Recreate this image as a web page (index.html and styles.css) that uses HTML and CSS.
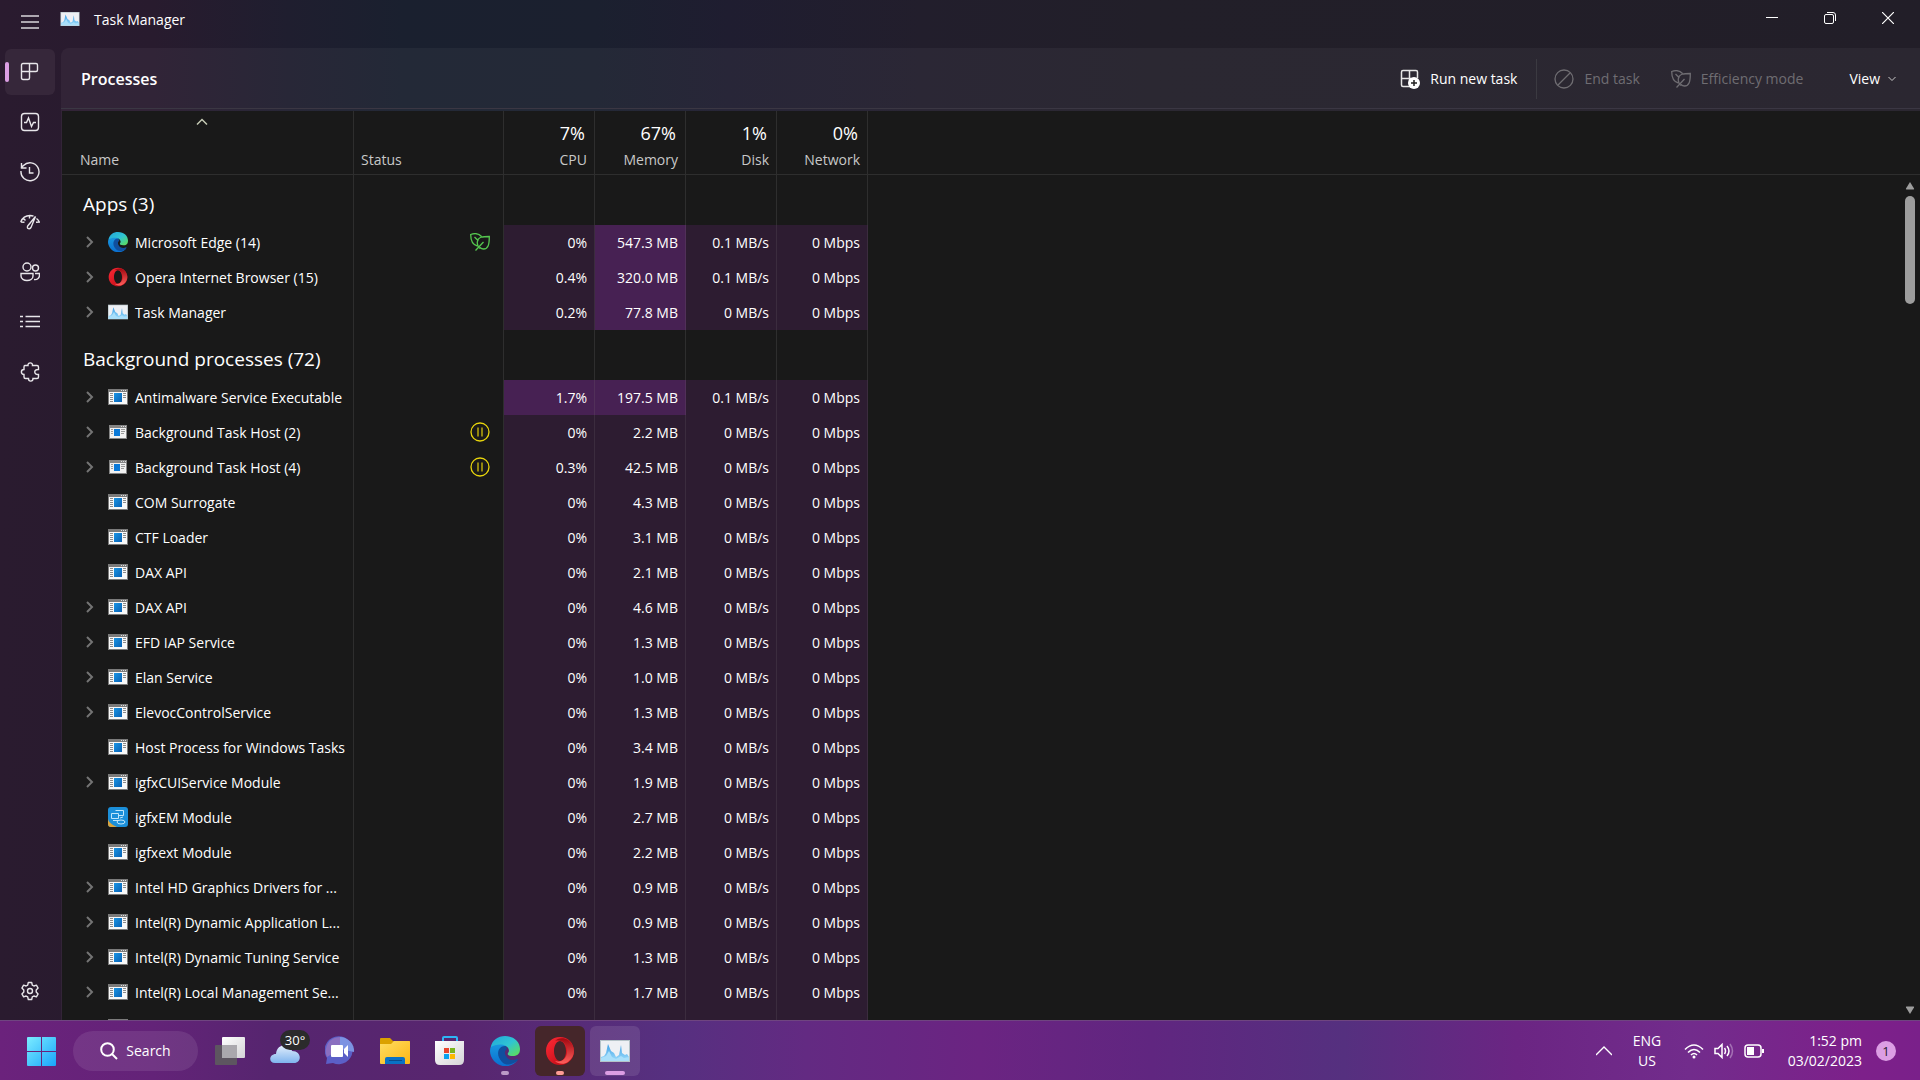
FILE: index.html
```html
<!DOCTYPE html>
<html lang="en">
<head>
<meta charset="utf-8">
<title>Task Manager</title>
<link rel="stylesheet" href="styles.css">
</head>
<body>
<svg class="defs" aria-hidden="true">
  <defs>
    <linearGradient id="gBlue" x1="0" y1="0" x2="1" y2="1"><stop offset="0" stop-color="#1a94e4"/><stop offset="1" stop-color="#0a62b4"/></linearGradient>
    <linearGradient id="gStart" x1="0" y1="0" x2="1" y2="1"><stop offset="0" stop-color="#7cecff"/><stop offset="1" stop-color="#18a4fb"/></linearGradient>
    <linearGradient id="gEdgeTop" x1="0" y1="0" x2="1" y2="1"><stop offset="0" stop-color="#22a5d8"/><stop offset=".5" stop-color="#2fc4d4"/><stop offset="1" stop-color="#63e04c"/></linearGradient>
    <linearGradient id="gEdgeLeft" x1="0" y1="0" x2="0" y2="1"><stop offset="0" stop-color="#1a9be0"/><stop offset="1" stop-color="#0a6fd0"/></linearGradient>
    <linearGradient id="gOpera" x1="0" y1="0" x2="1" y2="1"><stop offset="0" stop-color="#ff2a36"/><stop offset="1" stop-color="#b3060f"/></linearGradient>
    <linearGradient id="gOperaR" x1="0" y1="0" x2="0" y2="1"><stop offset="0" stop-color="#a00810"/><stop offset="1" stop-color="#ff5f5c"/></linearGradient>
    <linearGradient id="gFolder" x1="0" y1="0" x2="1" y2="1"><stop offset="0" stop-color="#ffdd62"/><stop offset="1" stop-color="#fcb714"/></linearGradient>
    <linearGradient id="gCloud" x1="0" y1="0" x2="0" y2="1"><stop offset="0" stop-color="#e2eefc"/><stop offset="1" stop-color="#7fb4ee"/></linearGradient>
    <linearGradient id="gWhite" x1="0" y1="0" x2="1" y2="1"><stop offset="0" stop-color="#ffffff"/><stop offset="1" stop-color="#d4d4d6"/></linearGradient>
    <linearGradient id="gWave" x1="0" y1="0" x2="0" y2="1"><stop offset="0" stop-color="#3f9fe6"/><stop offset="1" stop-color="#9bdcfb"/></linearGradient>
  </defs>
  <symbol id="proc" viewBox="0 0 20 16">
    <path fill="#7b7b7b" d="M0 0h20v16H0z"/><path fill="#f8f8f8" d="M1 3h18v12H1z"/>
    <path fill="#ddd" d="M13 1h1v1h-1zM15 1h1v1h-1zM17 1h1v1h-1z"/>
    <path fill="url(#gBlue)" d="M6 4h8v9H6z"/>
    <path stroke="#8a8a8a" d="M2 4.500h3M2 6.500h3M2 8.500h3M2 10.500h3M2 12.500h3M15 4.500h3M15 6.500h3M15 8.500h3"/>
  </symbol>
  <symbol id="host" viewBox="0 0 20 16">
    <path fill="#858585" d="M1 1h18v14H1z"/><path fill="#f1f1f1" d="M2 4h16v10H2z"/>
    <path fill="#ddd" d="M13 2h1v1h-1zM15 2h1v1h-1zM17 2h1v1h-1z"/>
    <path fill="#0a79d8" d="M6 5h6v7H6z"/>
    <path stroke="#9a9a9a" d="M3 5.500h2M3 7.500h2M3 9.500h2M13 5.500h4M13 7.500h4M13 9.500h3"/>
  </symbol>
  <symbol id="taskmgr" viewBox="0 0 30 22">
    <path fill="#b5c3c8" d="M0 0h30v22H0z"/><path fill="#eef0f4" d="M1 1h28v20H1z"/>
    <path fill="url(#gWave)" d="M1 17l3-1 2-3 2-9 3 7 3 2 2 4 3-2 2-10 1 8 3 2 2-1 2 3v4H1z"/>
    <path fill="#a9dffa" d="M1 18l5-2 3-5 3 6 4 2 5-3 3 2 5-1v4H1z"/>
  </symbol>
  <symbol id="edge" viewBox="0 0 30 30">
    <path fill="url(#gEdgeLeft)" d="M1 10C4 4 11 5 16 10c-6 1-7 8-2 13 4 4 9 4 13 2C21 32 10 32 4 25 0 20-1 15 1 10z"/>
    <path fill="#104f9e" d="M16 10c-8-1-11 9-4 16 4 4 10 3 15-1 1-1 1-2 0-2-4 2-9 1-11-3-2-3-1-6 1-7z"/>
    <path fill="url(#gEdgeTop)" d="M1 11C2 4 8 0 15 0c9 0 15 6 15 13 0 6-4 7-7 7-4 0-6-1-5-3 2-2 1-6-4-8-5-1-10 0-13 2z"/>
  </symbol>
  <symbol id="opera" viewBox="0 0 30 30">
    <path fill="url(#gOpera)" fill-rule="evenodd" d="M15 1C7 1 1 7 1 15s6 14 14 14 14-6 14-14S23 1 15 1zm0 4c3 0 6 4 6 10s-3 10-6 10-6-4-6-10 3-10 6-10z"/>
    <path fill="url(#gOperaR)" d="M10 5c2-3 9-4 13-1 4 3 6 7 6 11s-2 8-6 11c-4 3-10 2-13-1 7 2 12-3 12-10S17 3 10 5z"/>
  </symbol>
  <symbol id="igfx" viewBox="0 0 20 20">
    <rect width="20" height="20" rx="3" fill="#1b8fd9"/><path fill="#dca43c" d="M0 12c1 4 5 6 9 8H3c-2 0-3-1-3-3z"/>
    <path fill="none" stroke="#bfe6fb" d="M3.500 6.500h7v5h-7zM7.500 3.500h8v5h-5M5 13.500h5M12 11l3-1"/><ellipse cx="13" cy="15" rx="4" ry="2" fill="none" stroke="#c8eafc"/>
  </symbol>
  <symbol id="chev" viewBox="0 0 8 12"><path d="M1 1l5 5-5 5" fill="none" stroke="currentColor" stroke-width="2"/></symbol>
  <symbol id="leaf" viewBox="0 0 20 18">
    <path fill="none" stroke="currentColor" stroke-width="1.300" d="M7.500 13C3 12 .7 8 .7 1.500 5 0 9 .5 11.500 3.500M10 15.500C7 13 7 9 8 6.500c1.500-2 3-3 11.300-3 0 8-1 12.500-5.800 12.500-1.500 0-2.500-.5-3.500-1.500M4.500 4l4 4M5.500 17.500L13.500 9"/>
  </symbol>
  <symbol id="pause" viewBox="0 0 20 20"><circle cx="10" cy="10" r="9" fill="none" stroke="#e8d50c" stroke-width="1.300"/><path d="M8 5.500v9M12 5.500v9" stroke="#b9a90c" stroke-width="1.500"/></symbol>
</svg>

<div class="window">
  <header class="titlebar">
    <button class="menu" aria-label="Open navigation"><svg width="20" height="14" viewBox="0 0 20 14"><path d="M1 1h18M1 7h18M1 13h18" stroke="#d9d6db" stroke-width="1.300"/></svg></button>
    <svg class="app-icon" width="20" height="14"><use href="#taskmgr"/></svg>
    <h1>Task Manager</h1>
    <div class="caption">
      <button aria-label="Minimise"><svg width="12" height="12"><path d="M0 5.500h12" stroke="#fff"/></svg></button>
      <button aria-label="Restore"><svg width="12" height="12" fill="none" stroke="#fff"><rect x=".5" y="2.500" width="9" height="9" rx="1.500"/><path d="M3 .5h6q2.500 0 2.500 2.500v6"/></svg></button>
      <button aria-label="Close"><svg width="12" height="12"><path d="M0 0l12 12M12 0L0 12" stroke="#fff" stroke-width="1.200"/></svg></button>
    </div>
  </header>

  <div class="body">
    <nav class="sidebar">
      <button class="active" aria-label="Processes"><svg width="20" height="20" viewBox="0 0 20 20"><path d="M3 1.500h13q1.500 0 1.500 1.500v5q0 1.500-1.500 1.500h-6.500V16q0 1.500-1.500 1.500H3Q1.500 17.500 1.500 16V3q0-1.500 1.500-1.500zM9.500 1.500v8M1.500 9.500h8"/></svg></button>
      <button aria-label="Performance"><svg width="20" height="20" viewBox="0 0 20 20"><rect x="1.500" y="1.500" width="17" height="17" rx="3"/><path d="M4 10.500h2.500L8.500 6l3 8.500 2-4H16"/></svg></button>
      <button aria-label="App history"><svg width="20" height="20" viewBox="0 0 20 20"><path d="M1 9a9 9 0 1 0 2.500-5.500L1 6M1.500 1v5h5M9.500 5v6h4"/></svg></button>
      <button aria-label="Startup apps"><svg width="20" height="20" viewBox="0 0 20 20"><path d="M.7 10C2.500 5.500 6 3.500 10 3.500c1.500 0 2.500.2 3.500.7M.7 10l3.800.3M3.500 6.500l2 2M9.500 3.500v3M15.500 4.500L11 15.500q-1.500 2-3 1-1-1-.3-2.500zM16.500 6.500q2 1.500 2.800 3.500l-3.300.3"/></svg></button>
      <button aria-label="Users"><svg width="20" height="20" viewBox="0 0 20 20"><circle cx="7" cy="5" r="4"/><circle cx="15.500" cy="6" r="3"/><path d="M1 11.500h12V14c0 6-12 6-12 0zM15 11.500h4.500V13c0 3-2 5-5.500 4.500"/></svg></button>
      <button aria-label="Details"><svg width="20" height="20" viewBox="0 0 20 20"><path d="M5.500 4.500H20M5.500 9.500H20M5.500 14.500H20M0 4.500h3M0 9.500h3M0 14.500h3"/></svg></button>
      <button aria-label="Services"><svg width="20" height="20" viewBox="0 0 20 20"><path d="M4.500 3.500H8c-.5-3.500 5-3.500 4.500 0H17q1.500 0 1.500 1.500v2.500c-5-.5-5 5.500 0 5V15q0 1.500-1.500 1.500h-4c0 3.500-4.500 3.500-4.500 0H5.500q-1.500 0-1.500-1.500v-2.500c-3.500 0-3.500-5 0-5V5q0-1.500 1-1.500z"/></svg></button>
      <button class="settings" aria-label="Settings"><svg width="20" height="20" viewBox="0 0 20 20"><circle cx="10" cy="10" r="2.500"/><path d="M8.300 1.500h3.400l.6 2.600 1.600.9 2.500-.8 1.700 2.900-1.900 1.900v2l1.900 1.900-1.700 2.900-2.500-.8-1.600.9-.6 2.600H8.300l-.6-2.600-1.600-.9-2.500.8-1.700-2.900L3.800 11V9L1.900 7.100l1.700-2.900 2.500.8 1.600-.9z" stroke-linejoin="round"/></svg></button>
    </nav>

    <main>
      <div class="toolbar">
        <h2>Processes</h2>
        <button class="tool"><svg width="20" height="20" viewBox="0 0 20 20" fill="none" stroke="#e6e6e6" stroke-width="1.500"><path d="M10 17.500H3Q1.500 17.500 1.500 16V3Q1.500 1.500 3 1.500h13q1.500 0 1.500 1.500v6M9.500 1.500v10M1.500 9.500H11"/><circle cx="14" cy="14" r="6" fill="#fff" stroke="none"/><path d="M14 11v6M11 14h6" stroke="#222"/></svg>Run new task</button>
        <span class="divider"></span>
        <button class="tool end" disabled><svg width="20" height="20" viewBox="0 0 20 20" fill="none" stroke="currentColor" stroke-width="1.300"><circle cx="10" cy="10" r="9"/><path d="M4 16L16 4"/></svg>End task</button>
        <button class="tool eff" disabled><svg width="20" height="18"><use href="#leaf"/></svg>Efficiency mode</button>
        <button class="tool view">View<svg width="8" height="6" fill="none" stroke="#ccc"><path d="M.5 1L4 4.500 7.500 1"/></svg></button>
      </div>

      <div class="sheet">
        <div class="list">
          <table>
            <colgroup><col class="c-name"><col class="c-status"><col class="c-num"><col class="c-num"><col class="c-num"><col class="c-num"><col></colgroup>
            <thead>
              <tr>
                <th class="name"><svg class="sort" width="12" height="8" fill="none" stroke="#c5cbb5" stroke-width="1.500"><path d="M1 6.500l5-5 5 5"/></svg>Name</th>
                <th class="status">Status</th>
                <th><b>7%</b>CPU</th><th><b>67%</b>Memory</th><th><b>1%</b>Disk</th><th><b>0%</b>Network</th><th class="rest"></th>
              </tr>
            </thead>
            <tbody>
              <tr class="group"><th scope="rowgroup">Apps (3)</th><td></td><td></td><td></td><td></td><td></td><td></td></tr>
              <tr><td><div class="proc"><button aria-label="Expand"><svg><use href="#chev"/></svg></button><svg class="sq"><use href="#edge"/></svg><span>Microsoft Edge (14)</span></div></td><td class="flag"><svg class="leaf" width="20" height="18"><use href="#leaf"/></svg></td><td>0%</td><td class="hot">547.3 MB</td><td>0.1 MB/s</td><td>0 Mbps</td><td></td></tr>
              <tr><td><div class="proc"><button aria-label="Expand"><svg><use href="#chev"/></svg></button><svg class="sq"><use href="#opera"/></svg><span>Opera Internet Browser (15)</span></div></td><td></td><td>0.4%</td><td class="hot">320.0 MB</td><td>0.1 MB/s</td><td>0 Mbps</td><td></td></tr>
              <tr><td><div class="proc"><button aria-label="Expand"><svg><use href="#chev"/></svg></button><svg><use href="#taskmgr"/></svg><span>Task Manager</span></div></td><td></td><td>0.2%</td><td class="hot">77.8 MB</td><td>0 MB/s</td><td>0 Mbps</td><td></td></tr>
              <tr class="group"><th scope="rowgroup">Background processes (72)</th><td></td><td></td><td></td><td></td><td></td><td></td></tr>
              <tr><td><div class="proc"><button aria-label="Expand"><svg><use href="#chev"/></svg></button><svg><use href="#proc"/></svg><span>Antimalware Service Executable</span></div></td><td></td><td class="hot">1.7%</td><td class="hot">197.5 MB</td><td>0.1 MB/s</td><td>0 Mbps</td><td></td></tr>
              <tr><td><div class="proc"><button aria-label="Expand"><svg><use href="#chev"/></svg></button><svg><use href="#host"/></svg><span>Background Task Host (2)</span></div></td><td class="flag"><svg width="20" height="20"><use href="#pause"/></svg></td><td>0%</td><td>2.2 MB</td><td>0 MB/s</td><td>0 Mbps</td><td></td></tr>
              <tr><td><div class="proc"><button aria-label="Expand"><svg><use href="#chev"/></svg></button><svg><use href="#host"/></svg><span>Background Task Host (4)</span></div></td><td class="flag"><svg width="20" height="20"><use href="#pause"/></svg></td><td>0.3%</td><td>42.5 MB</td><td>0 MB/s</td><td>0 Mbps</td><td></td></tr>
              <tr><td><div class="proc leafless"><svg><use href="#proc"/></svg><span>COM Surrogate</span></div></td><td></td><td>0%</td><td>4.3 MB</td><td>0 MB/s</td><td>0 Mbps</td><td></td></tr>
              <tr><td><div class="proc leafless"><svg><use href="#proc"/></svg><span>CTF Loader</span></div></td><td></td><td>0%</td><td>3.1 MB</td><td>0 MB/s</td><td>0 Mbps</td><td></td></tr>
              <tr><td><div class="proc leafless"><svg><use href="#proc"/></svg><span>DAX API</span></div></td><td></td><td>0%</td><td>2.1 MB</td><td>0 MB/s</td><td>0 Mbps</td><td></td></tr>
              <tr><td><div class="proc"><button aria-label="Expand"><svg><use href="#chev"/></svg></button><svg><use href="#proc"/></svg><span>DAX API</span></div></td><td></td><td>0%</td><td>4.6 MB</td><td>0 MB/s</td><td>0 Mbps</td><td></td></tr>
              <tr><td><div class="proc"><button aria-label="Expand"><svg><use href="#chev"/></svg></button><svg><use href="#proc"/></svg><span>EFD IAP Service</span></div></td><td></td><td>0%</td><td>1.3 MB</td><td>0 MB/s</td><td>0 Mbps</td><td></td></tr>
              <tr><td><div class="proc"><button aria-label="Expand"><svg><use href="#chev"/></svg></button><svg><use href="#proc"/></svg><span>Elan Service</span></div></td><td></td><td>0%</td><td>1.0 MB</td><td>0 MB/s</td><td>0 Mbps</td><td></td></tr>
              <tr><td><div class="proc"><button aria-label="Expand"><svg><use href="#chev"/></svg></button><svg><use href="#proc"/></svg><span>ElevocControlService</span></div></td><td></td><td>0%</td><td>1.3 MB</td><td>0 MB/s</td><td>0 Mbps</td><td></td></tr>
              <tr><td><div class="proc leafless"><svg><use href="#proc"/></svg><span>Host Process for Windows Tasks</span></div></td><td></td><td>0%</td><td>3.4 MB</td><td>0 MB/s</td><td>0 Mbps</td><td></td></tr>
              <tr><td><div class="proc"><button aria-label="Expand"><svg><use href="#chev"/></svg></button><svg><use href="#proc"/></svg><span>igfxCUIService Module</span></div></td><td></td><td>0%</td><td>1.9 MB</td><td>0 MB/s</td><td>0 Mbps</td><td></td></tr>
              <tr><td><div class="proc leafless"><svg class="sq"><use href="#igfx"/></svg><span>igfxEM Module</span></div></td><td></td><td>0%</td><td>2.7 MB</td><td>0 MB/s</td><td>0 Mbps</td><td></td></tr>
              <tr><td><div class="proc leafless"><svg><use href="#proc"/></svg><span>igfxext Module</span></div></td><td></td><td>0%</td><td>2.2 MB</td><td>0 MB/s</td><td>0 Mbps</td><td></td></tr>
              <tr><td><div class="proc"><button aria-label="Expand"><svg><use href="#chev"/></svg></button><svg><use href="#proc"/></svg><span>Intel HD Graphics Drivers for ...</span></div></td><td></td><td>0%</td><td>0.9 MB</td><td>0 MB/s</td><td>0 Mbps</td><td></td></tr>
              <tr><td><div class="proc"><button aria-label="Expand"><svg><use href="#chev"/></svg></button><svg><use href="#proc"/></svg><span>Intel(R) Dynamic Application L...</span></div></td><td></td><td>0%</td><td>0.9 MB</td><td>0 MB/s</td><td>0 Mbps</td><td></td></tr>
              <tr><td><div class="proc"><button aria-label="Expand"><svg><use href="#chev"/></svg></button><svg><use href="#proc"/></svg><span>Intel(R) Dynamic Tuning Service</span></div></td><td></td><td>0%</td><td>1.3 MB</td><td>0 MB/s</td><td>0 Mbps</td><td></td></tr>
              <tr><td><div class="proc"><button aria-label="Expand"><svg><use href="#chev"/></svg></button><svg><use href="#proc"/></svg><span>Intel(R) Local Management Se...</span></div></td><td></td><td>0%</td><td>1.7 MB</td><td>0 MB/s</td><td>0 Mbps</td><td></td></tr>
              <tr><td><div class="proc leafless"><svg><use href="#proc"/></svg></div></td><td></td><td></td><td></td><td></td><td></td><td></td></tr>
            </tbody>
          </table>
        </div>
        <div class="scroll">
          <svg width="10" height="8"><path d="M5 0l4 6.500q.5 1-.5 1h-7q-1 0-.5-1z" fill="#9d9d9d"/></svg>
          <span class="thumb"></span>
          <svg class="down" width="10" height="8"><path d="M5 8L1 1.500Q.5.500 1.500.500h7q1 0 .5 1z" fill="#9d9d9d"/></svg>
        </div>
      </div>
    </main>
  </div>
</div>

<footer class="taskbar">
  <button class="item" aria-label="Start"><svg width="30" height="30" viewBox="0 0 30 30"><path fill="url(#gStart)" d="M2 1h13v14H1V2q0-1 1-1zM16 1h13q1 0 1 1v13H16zM1 16h14v14H2q-1 0-1-1zM16 16h14v13q0 1-1 1H16z"/></svg></button>
  <button class="search"><svg width="18" height="18" fill="none" stroke="#fff" stroke-width="2"><circle cx="7.500" cy="7.500" r="6.300"/><path d="M12 12l5 5"/></svg>Search</button>
  <button class="item" aria-label="Task view"><svg width="30" height="28"><rect y="8" width="22" height="20" rx="1" fill="#5d5560"/><rect x="7" width="23" height="21" rx="1" fill="url(#gWhite)"/><path d="M7 8h15v13H7z" fill="#aaa8ad"/></svg></button>
  <button class="item" aria-label="Weather"><svg width="30" height="30"><path d="M5 27c-7 0-6-9 1-9C7 7 20 7 22 15c10 0 10 12 2 12z" fill="url(#gCloud)"/></svg><span class="temp">30°</span></button>
  <button class="item" aria-label="Chat"><svg width="30" height="30"><path d="M1 28l1-6A14 14 0 1 1 8 27z" fill="#5b5fc7"/><path d="M15 1a14 14 0 0 0-13 20l13-8z" fill="#8b6fc0"/><path d="M15 1a14 14 0 0 1 14 15l-14-3z" fill="#7c93e2"/><rect x="6" y="9" width="12" height="12" rx="1" fill="#fff"/><path d="M19 13l4-4v12l-4-4z" fill="#fff"/></svg></button>
  <button class="item" aria-label="File Explorer"><svg width="30" height="28"><path d="M0 10V2q0-1 1-1h9l3 3h16q1 0 1 1v5z" fill="#dba100"/><path d="M0 7h11l3-3h15q1 0 1 1v21q0 1-1 1H1q-1 0-1-1z" fill="url(#gFolder)"/><path d="M5 27v-5q0-2 2-2h16q2 0 2 2v5z" fill="#0a72c4"/><path d="M9 23.500h13" stroke="#0a4c8c"/></svg></button>
  <button class="item" aria-label="Microsoft Store"><svg width="30" height="30"><path d="M8 5V2q0-1 1-1h12q1 0 1 1v3" fill="none" stroke="#2eb4f5" stroke-width="2"/><path d="M0 5h29v19q0 5-5 5H5q-5 0-5-5z" fill="url(#gWhite)"/><path d="M9 12h5v5H9z" fill="#e8452c"/><path d="M15 12h5v5h-5z" fill="#7ab51d"/><path d="M9 18h5v5H9z" fill="#0aa2ee"/><path d="M15 18h5v5h-5z" fill="#fbb900"/></svg></button>
  <button class="item run" aria-label="Microsoft Edge"><svg width="30" height="30"><use href="#edge"/></svg></button>
  <button class="item run opera" aria-label="Opera"><svg width="30" height="30"><use href="#opera"/></svg></button>
  <button class="item run current" aria-label="Task Manager"><svg width="30" height="22"><use href="#taskmgr"/></svg></button>

  <div class="tray">
    <button aria-label="Show hidden icons"><svg width="16" height="10"><path d="M0 9l8-8 8 8" fill="none" stroke="#fff" stroke-width="1.300"/></svg></button>
    <button class="lang">ENG<br>US</button>
    <button class="quick" aria-label="Network, sound, battery">
      <svg width="20" height="16" fill="none" stroke="#fff" stroke-width="1.600"><path d="M1 6.500q9-9 18 0M4 9.500q6-6 12 0M7 12q3-3 6 0"/><circle cx="10" cy="14" r="1.500" fill="#fff" stroke="none"/></svg>
      <svg width="20" height="16" fill="none" stroke="#fff" stroke-width="1.500"><path d="M1 5.500h3l4-4v13l-4-4H1zM10.500 5q2 3 0 6M13 3q4 5 0 10"/><path d="M16 1q5 7 0 14" stroke="#a470b4"/></svg>
      <svg width="20" height="14" fill="none" stroke="#fff" stroke-width="1.500"><rect x="1" y="1" width="16" height="12" rx="3"/><path d="M19 5v4" stroke-width="2"/><path d="M3 3h7v8H3z" fill="#fff" stroke="none"/></svg>
    </button>
    <button class="clock">1:52 pm<br>03/02/2023</button>
    <button class="badge" aria-label="1 notification">1</button>
  </div>
</footer>
</body>
</html>
```
FILE: styles.css
```css
* { box-sizing: border-box; }

body {
  margin: 0;
  height: 100vh;
  display: flex;
  flex-direction: column;
  overflow: hidden;
  color: #fff;
  font: 14px/20px "Open Sans", "Noto Sans", sans-serif;
}

svg { display: block; flex: none; }
.defs { position: absolute; width: 0; height: 0; }
button { margin: 0; padding: 0; border: 0; background: none; color: inherit; font: inherit; }
h1, h2 { margin: 0; font-size: 14px; font-weight: 400; }

.window {
  flex: 1;
  min-height: 0;
  display: flex;
  flex-direction: column;
  background: linear-gradient(90deg, #2a1b2f 0, #281b2e 8%, #1f1e2f 15%, #1a202f 21%, #1b202f 31%, #1f1d30 38%, #221e2c 48%, #221f29 60%, #221e28 100%);
}

.titlebar { display: flex; align-items: flex-start; height: 48px; padding-left: 20px; }
.menu { margin: 15px 20px 0 0; }
.app-icon { margin-top: 12px; }
.titlebar h1 { margin: 10px 0 0 14px; }
.caption { display: flex; margin-left: auto; padding-right: 3px; }
.caption button { display: grid; place-items: center; width: 58px; height: 36px; }

.body { flex: 1; min-height: 0; display: flex; }

.sidebar { display: flex; flex-direction: column; gap: 4px; width: 61px; padding: 1px 6px 6px 5px; }
.sidebar button { position: relative; display: flex; align-items: center; height: 46px; padding-left: 15px; border-radius: 6px; }
.sidebar svg { fill: none; stroke: #e8e6ea; stroke-width: 1.4px; }
.sidebar .active { background: #36273a; }
.sidebar .active::before { content: ""; position: absolute; left: 0; top: 13px; width: 4px; height: 20px; border-radius: 2px; background: #dc9ee4; }
.sidebar .settings { margin-top: auto; }

main { flex: 1; min-width: 0; display: flex; flex-direction: column; background: rgba(255, 255, 255, 0.045); border-top-left-radius: 8px; }

.toolbar { display: flex; align-items: center; height: 61px; padding: 2px 24px 0 20px; border-bottom: 1px solid #3b3743; }
.toolbar h2 { margin-right: auto; font-size: 16px; font-weight: 600; }
.tool { display: flex; align-items: center; gap: 10px; }
.tool:disabled { color: #6f6d72; }
.divider { width: 1px; height: 40px; margin: 0 17px 0 19px; background: #3b3a41; }
.end { margin-right: 31px; }
.view { margin-left: 46px; gap: 8px; }

.sheet { flex: 1; min-height: 0; display: flex; margin: 2px 0 0 1px; background: #191919; }
.list { flex: 1; overflow: hidden; }

table { width: 100%; table-layout: fixed; border-spacing: 0; }
.c-name { width: 292px; }
.c-status { width: 150px; }
.c-num { width: 91px; }
th, td { padding: 0; font-weight: 400; text-align: right; border-right: 1px solid #2e2e2e; white-space: nowrap; }
th:last-child, td:last-child { border-right: 0; }

thead th { height: 64px; padding: 0 7px 4px; vertical-align: bottom; color: #c8c8c8; border-bottom: 1px solid #2e2e2e; }
thead b { display: block; padding: 0 2px 5px 0; color: #fff; font-size: 18px; line-height: 24px; font-weight: 400; }
thead .name { position: relative; padding-left: 18px; text-align: left; }
thead .status { text-align: left; }
.sort { position: absolute; left: 134px; top: 7px; }

tbody tr { height: 35px; }
tbody td { padding-right: 7px; }
tbody td:nth-child(n+3):nth-child(-n+6) { background: #2d1c31; border-color: #3b2c3e; }
tbody td.hot:nth-child(n+3) { background: #472153; border-color: #513059; }
tbody .group { height: 50px; }
.group th { padding: 8px 0 0 21px; font-size: 19px; text-align: left; }
tbody .group td:nth-child(n+2):nth-child(-n+6) { background: none; border-color: #2e2e2e; }

.proc { display: flex; align-items: center; padding-left: 24px; }
.proc button { margin: 0 14px 2px 0; color: #747474; }
.proc button svg { width: 8px; height: 12px; }
.proc > svg { width: 20px; height: 16px; margin: 0 7px 2px 0; }
.proc > .sq { height: 20px; }
.leafless { padding-left: 46px; }
.flag svg { margin: 0 6px 2px auto; }
.leaf { color: #55c74f; }

.scroll { display: flex; flex-direction: column; align-items: center; width: 18px; margin-top: 63px; padding: 7px 3px 6px 0; border-top: 1px solid #2e2e2e; }
.thumb { width: 10px; height: 108px; margin-top: 6px; border-radius: 5px; background: #9d9d9d; }
.down { margin-top: auto; }

.taskbar {
  display: flex;
  align-items: center;
  gap: 5px;
  height: 60px;
  padding-left: 16px;
  border-top: 1px solid #6f4580;
  background: linear-gradient(90deg, #6b227c 0, #632378 8%, #56256f 14%, #58266f 24%, #563080 35%, #632a82 42%, #6b2482 51%, #602680 60%, #55307f 70%, #6b2583 79%, #722c8c 88%, #7d208a 97%, #7a208a 100%);
}
.item { position: relative; display: grid; place-items: center; width: 50px; height: 50px; border-radius: 6px; }
.search { display: flex; align-items: center; justify-content: center; gap: 8px; width: 125px; height: 40px; margin: 0 2px; border-radius: 20px; background: rgba(255, 255, 255, 0.09); }
.temp { position: absolute; left: 20px; top: 4px; width: 30px; height: 20px; border-radius: 10px; background: #2b2b2b; font-size: 13px; text-align: center; }
.run::after { content: ""; position: absolute; left: 21px; bottom: 1px; width: 8px; height: 4px; border-radius: 2px; background: #bb9ac7; }
.opera { background: #45262a; }
.opera::after { background: #ff9c94; }
.current { background: rgba(255, 255, 255, 0.1); }
.current::after { left: 15px; width: 20px; background: #dc9ee4; }

.tray { display: flex; align-items: center; margin-left: auto; padding-right: 24px; }
.lang { width: 30px; margin: 0 22px 0 20px; }
.quick { display: flex; align-items: center; gap: 10px; }
.clock { width: 80px; margin: 0 14px 0 18px; text-align: right; white-space: nowrap; }
.badge { width: 20px; height: 20px; border-radius: 50%; background: #dc9ee4; color: #2a1b2f; font-size: 13px; }
```
